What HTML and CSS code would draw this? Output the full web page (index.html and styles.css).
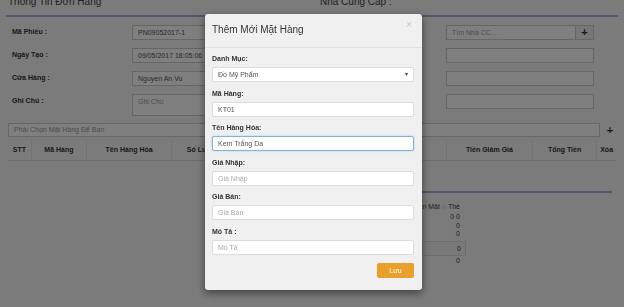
FILE: index.html
```html
<!DOCTYPE html>
<html lang="vi">
<head>
    <meta charset="UTF-8">
    <meta name="viewport" content="width=device-width, initial-scale=1.0">
    <title>Thêm Mới Mặt Hàng</title>
    <link rel="stylesheet" href="styles.css">
</head>
<body>
<div class="page">
    <div class="head">
        <div class="head-left">Thông Tin Đơn Hàng</div>
        <div class="head-right">Nhà Cung Cấp :</div>
    </div>

    <div class="info">
        <div class="info-left">
            <div class="row"><span class="lbl">Mã Phiếu :</span><div class="box">PN09052017-1</div></div>
            <div class="row"><span class="lbl">Ngày Tạo :</span><div class="box">09/05/2017 18:05:06</div></div>
            <div class="row"><span class="lbl">Cửa Hàng :</span><div class="box">Nguyen An Vu</div></div>
            <div class="row tall"><span class="lbl">Ghi Chú :</span><div class="box ph">Ghi Chú</div></div>
        </div>
        <div class="info-right">
            <div class="row"><div class="box ph">Tìm Nhà CC...</div><div class="add">+</div></div>
            <div class="row"><div class="box wide"></div></div>
            <div class="row"><div class="box wide"></div></div>
            <div class="row"><div class="box wide"></div></div>
        </div>
    </div>

    <div class="pick">
        <div class="box ph">Phải Chọn Mặt Hàng Để Bán</div>
        <span class="pick-add">+</span>
    </div>

    <div class="items">
        <div class="col c-stt">STT</div>
        <div class="col c-ma">Mã Hàng</div>
        <div class="col c-ten">Tên Hàng Hóa</div>
        <div class="col c-sl">Số Lượng</div>
        <div class="col c-dg">Đơn Giá</div>
        <div class="col c-tt">Thành Tiền</div>
        <div class="col c-gg">Tiền Giảm Giá</div>
        <div class="col c-tong">Tổng Tiền</div>
        <div class="col c-xoa">Xóa</div>
    </div>

    <div class="summary">
        <div class="sum-col">
            <div class="sum-line l1">● Tiền Mặt <span class="radio">○</span> Thẻ</div>
            <div class="sum-line l2">0 0</div>
            <div class="sum-line l3">0</div>
            <div class="sum-line l3">0</div>
            <div class="sum-box">0</div>
            <div class="sum-line l2">0</div>
        </div>
    </div>
</div>

<div class="backdrop"></div>

<div class="modal">
    <div class="modal-header">
        <span class="modal-title">Thêm Mới Mặt Hàng</span>
        <span class="close">×</span>
    </div>
    <div class="modal-body">
        <div class="field">
            <label>Danh Mục:</label>
            <div class="input select">Đồ Mỹ Phẩm<span class="caret">▾</span></div>
        </div>
        <div class="field">
            <label>Mã Hàng:</label>
            <div class="input">KT01</div>
        </div>
        <div class="field">
            <label>Tên Hàng Hóa:</label>
            <div class="input focus">Kem Trắng Da</div>
        </div>
        <div class="field">
            <label>Giá Nhập:</label>
            <div class="input ph">Giá Nhập</div>
        </div>
        <div class="field">
            <label>Giá Bán:</label>
            <div class="input ph">Giá Bán</div>
        </div>
        <div class="field">
            <label>Mô Tả :</label>
            <div class="input ph">Mô Tả</div>
        </div>
        <div class="actions">
            <button class="btn-save">Lưu</button>
        </div>
    </div>
</div>
</body>
</html>
```

FILE: styles.css
```css
body {
    margin: 0;
    font-family: "Liberation Sans", Arial, sans-serif;
    font-size: 7px;
    color: #333;
    background: #f6f6f6;
    overflow: hidden;
}

/* page behind the dialog */
.page {
    width: 624px;
}
.head {
    display: flex;
    height: 15px;
    margin: 0 6px;
    border-bottom: 2px solid #aca8d8;
    font-size: 10px;
    line-height: 10px;
    color: #444;
}
.head-left {
    width: 312px;
    padding-left: 2px;
    margin-top: -3px;
}
.head-right {
    margin-top: -3px;
}
.info {
    display: grid;
    grid-template-columns: 314px 1fr;
    padding-top: 8px;
}
.info-left, .info-right {
    display: flex;
    flex-direction: column;
    gap: 8px;
}
.row {
    display: flex;
    height: 15px;
}
.row.tall {
    height: 22px;
}
.lbl {
    width: 120px;
    padding-left: 12px;
    font-weight: bold;
    line-height: 13px;
}
.box {
    box-sizing: border-box;
    background: #fff;
    border: 1px solid #ccc;
    padding: 3px 5px;
    color: #555;
    width: 180px;
}
.box.ph {
    color: #999;
}
.info-right .row {
    padding-left: 132px;
}
.info-right .box {
    width: 130px;
}
.info-right .box.wide {
    width: 148px;
}
.add {
    width: 18px;
    box-sizing: border-box;
    border: 1px solid #ccc;
    border-left: 0;
    background: #eee;
    text-align: center;
    font-size: 11px;
    font-weight: bold;
    line-height: 13px;
}
.pick {
    display: flex;
    align-items: center;
    margin: 7px 0 0 8px;
    height: 14px;
}
.pick .box {
    width: 592px;
    height: 14px;
    padding-top: 2px;
}
.pick-add {
    width: 20px;
    text-align: center;
    font-size: 11px;
    font-weight: bold;
}
.items {
    display: flex;
    margin: 3px 8px 0 8px;
    height: 20px;
    border-bottom: 1px solid #ddd;
    font-weight: bold;
}
.col {
    line-height: 20px;
    text-align: center;
    border-right: 1px solid #e4e4e4;
}
.c-stt { width: 23px; }
.c-ma { width: 55px; }
.c-ten { width: 85px; }
.c-sl { width: 64px; }
.c-dg { width: 111px; }
.c-tt { width: 100px; }
.c-gg { width: 86px; }
.c-tong { width: 64px; }
.c-xoa { width: 19px; border-right: 0; }

.summary {
    margin: 30px 0 0 320px;
    width: 292px;
    border-top: 2px solid #aca8d8;
    padding-top: 9px;
}
.sum-col {
    width: 146px;
    text-align: right;
    color: #444;
}
.sum-line {
    padding-right: 6px;
}
.l1 { line-height: 10px; }
.l2 { line-height: 10px; }
.l3 { line-height: 8px; }
.radio { color: #aaa; }
.sum-box {
    margin: 3px 0 0 102px;
    height: 15px;
    box-sizing: border-box;
    border: 1px solid #ddd;
    background: #f2f2f2;
    line-height: 14px;
    padding-right: 4px;
}

/* dialog */
.backdrop {
    position: fixed;
    inset: 0;
    background: rgba(0, 0, 0, 0.5);
}
.modal {
    position: fixed;
    left: 205px;
    top: 14px;
    width: 217px;
    background: #f0f0f0;
    border-radius: 3px;
    box-shadow: 0 3px 9px rgba(0, 0, 0, 0.5);
}
.modal-header {
    display: flex;
    justify-content: space-between;
    height: 33px;
    padding: 0 7px;
    border-bottom: 1px solid #e2e2e2;
}
.modal-title {
    font-size: 10px;
    line-height: 12px;
    padding-top: 10px;
    color: #333;
}
.close {
    font-size: 10px;
    line-height: 10px;
    padding-top: 6px;
    margin-right: 3px;
    color: #c4c4c4;
}
.modal-body {
    padding: 7px 8px 12px 7px;
}
.field {
    margin-bottom: 7.5px;
}
.field label {
    display: block;
    font-weight: bold;
    line-height: 8px;
    margin-bottom: 4px;
    color: #333;
}
.input {
    box-sizing: border-box;
    height: 15px;
    background: #fff;
    border: 1px solid #ddd;
    border-radius: 2px;
    padding: 0 5px;
    line-height: 13px;
    color: #555;
}
.input.ph {
    color: #aaa;
}
.input.focus {
    border-color: #7fb2e0;
    box-shadow: 0 0 2px rgba(102, 175, 233, 0.6);
}
.select {
    display: flex;
    justify-content: space-between;
}
.caret {
    font-size: 6px;
    color: #444;
}
.actions {
    display: flex;
    justify-content: flex-end;
    padding-top: 0.5px;
}
.btn-save {
    width: 37px;
    height: 15px;
    border: 0;
    border-radius: 2px;
    background: #e9a12c;
    color: #fff;
    font-family: inherit;
    font-size: 7px;
    padding: 0;
}
```
